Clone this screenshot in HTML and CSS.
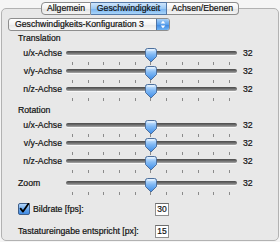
FILE: index.html
```html
<!DOCTYPE html>
<html>
<head>
<meta charset="utf-8">
<link rel="stylesheet" href="styles.css">
</head>
<body>
<div class="window">
  <div class="tabs">
    <div class="tab tab-first">Allgemein</div>
    <div class="tab tab-selected">Geschwindigkeit</div>
    <div class="tab tab-last">Achsen/Ebenen</div>
  </div>
  <div class="box">
    <div class="popup">
      <span class="popup-text">Geschwindigkeits-Konfiguration 3</span>
      <span class="stepper">
        <svg width="13" height="13" viewBox="0 0 13 13">
          <path d="M6.5 2.5 L9 5.5 H4 Z" fill="#fff"/>
          <path d="M6.5 10.5 L9 7.5 H4 Z" fill="#fff"/>
        </svg>
      </span>
    </div>

    <div class="section-title">Translation</div>
    <div class="slider-group">
      <div class="slider-row">
        <span class="label">u/x-Achse</span>
        <div class="slider"><div class="track"></div><div class="ticks"><i></i><i></i><i></i><i></i><i></i><i></i><i></i><i></i><i></i><i></i><i></i></div>
          <svg class="thumb" width="12" height="15" viewBox="0 0 12 15"><defs><linearGradient id="g1" x1="0" y1="0" x2="0" y2="1"><stop offset="0" stop-color="#d8ecff"/><stop offset="0.45" stop-color="#7fb8f4"/><stop offset="1" stop-color="#3d8be6"/></linearGradient></defs><path d="M2.5 0.5 H9.5 Q11.5 0.5 11.5 2.5 V8.5 L6 14 L0.5 8.5 V2.5 Q0.5 0.5 2.5 0.5 Z" fill="url(#g1)" stroke="#4d6f9c"/><path d="M2.5 2 H9.5" stroke="#fff" stroke-opacity="0.8"/></svg>
        </div>
        <span class="value">32</span>
      </div>
      <div class="slider-row">
        <span class="label">v/y-Achse</span>
        <div class="slider"><div class="track"></div><div class="ticks"><i></i><i></i><i></i><i></i><i></i><i></i><i></i><i></i><i></i><i></i><i></i></div>
          <svg class="thumb" width="12" height="15" viewBox="0 0 12 15"><path d="M2.5 0.5 H9.5 Q11.5 0.5 11.5 2.5 V8.5 L6 14 L0.5 8.5 V2.5 Q0.5 0.5 2.5 0.5 Z" fill="url(#g1)" stroke="#4d6f9c"/><path d="M2.5 2 H9.5" stroke="#fff" stroke-opacity="0.8"/></svg>
        </div>
        <span class="value">32</span>
      </div>
      <div class="slider-row">
        <span class="label">n/z-Achse</span>
        <div class="slider"><div class="track"></div><div class="ticks"><i></i><i></i><i></i><i></i><i></i><i></i><i></i><i></i><i></i><i></i><i></i></div>
          <svg class="thumb" width="12" height="15" viewBox="0 0 12 15"><path d="M2.5 0.5 H9.5 Q11.5 0.5 11.5 2.5 V8.5 L6 14 L0.5 8.5 V2.5 Q0.5 0.5 2.5 0.5 Z" fill="url(#g1)" stroke="#4d6f9c"/><path d="M2.5 2 H9.5" stroke="#fff" stroke-opacity="0.8"/></svg>
        </div>
        <span class="value">32</span>
      </div>
    </div>

    <div class="section-title section-second">Rotation</div>
    <div class="slider-group">
      <div class="slider-row">
        <span class="label">u/x-Achse</span>
        <div class="slider"><div class="track"></div><div class="ticks"><i></i><i></i><i></i><i></i><i></i><i></i><i></i><i></i><i></i><i></i><i></i></div>
          <svg class="thumb" width="12" height="15" viewBox="0 0 12 15"><path d="M2.5 0.5 H9.5 Q11.5 0.5 11.5 2.5 V8.5 L6 14 L0.5 8.5 V2.5 Q0.5 0.5 2.5 0.5 Z" fill="url(#g1)" stroke="#4d6f9c"/><path d="M2.5 2 H9.5" stroke="#fff" stroke-opacity="0.8"/></svg>
        </div>
        <span class="value">32</span>
      </div>
      <div class="slider-row">
        <span class="label">v/y-Achse</span>
        <div class="slider"><div class="track"></div><div class="ticks"><i></i><i></i><i></i><i></i><i></i><i></i><i></i><i></i><i></i><i></i><i></i></div>
          <svg class="thumb" width="12" height="15" viewBox="0 0 12 15"><path d="M2.5 0.5 H9.5 Q11.5 0.5 11.5 2.5 V8.5 L6 14 L0.5 8.5 V2.5 Q0.5 0.5 2.5 0.5 Z" fill="url(#g1)" stroke="#4d6f9c"/><path d="M2.5 2 H9.5" stroke="#fff" stroke-opacity="0.8"/></svg>
        </div>
        <span class="value">32</span>
      </div>
      <div class="slider-row">
        <span class="label">n/z-Achse</span>
        <div class="slider"><div class="track"></div><div class="ticks"><i></i><i></i><i></i><i></i><i></i><i></i><i></i><i></i><i></i><i></i><i></i></div>
          <svg class="thumb" width="12" height="15" viewBox="0 0 12 15"><path d="M2.5 0.5 H9.5 Q11.5 0.5 11.5 2.5 V8.5 L6 14 L0.5 8.5 V2.5 Q0.5 0.5 2.5 0.5 Z" fill="url(#g1)" stroke="#4d6f9c"/><path d="M2.5 2 H9.5" stroke="#fff" stroke-opacity="0.8"/></svg>
        </div>
        <span class="value">32</span>
      </div>
    </div>

    <div class="slider-group zoom-group">
      <div class="slider-row">
        <span class="label label-left">Zoom</span>
        <div class="slider"><div class="track"></div><div class="ticks"><i></i><i></i><i></i><i></i><i></i><i></i><i></i><i></i><i></i><i></i><i></i></div>
          <svg class="thumb" width="12" height="15" viewBox="0 0 12 15"><path d="M2.5 0.5 H9.5 Q11.5 0.5 11.5 2.5 V8.5 L6 14 L0.5 8.5 V2.5 Q0.5 0.5 2.5 0.5 Z" fill="url(#g1)" stroke="#4d6f9c"/><path d="M2.5 2 H9.5" stroke="#fff" stroke-opacity="0.8"/></svg>
        </div>
        <span class="value">32</span>
      </div>
    </div>

    <div class="field-row field-first">
      <span class="field-label">
        <svg class="checkbox" width="12" height="12" viewBox="0 0 12 12"><defs><linearGradient id="cb" x1="0" y1="0" x2="0" y2="1"><stop offset="0" stop-color="#bcdcfb"/><stop offset="0.5" stop-color="#6aa8ec"/><stop offset="1" stop-color="#3c88e3"/></linearGradient></defs><rect x="0.5" y="0.5" width="11" height="11" rx="1.5" fill="url(#cb)" stroke="#3f5f8a"/><path d="M2.6 5.6 L5 8.6 L10.6 0.6" fill="none" stroke="#000" stroke-width="1.8" stroke-linecap="round" stroke-linejoin="round"/></svg>
        Bildrate [fps]:
      </span>
      <span class="input">30</span>
    </div>
    <div class="field-row">
      <span class="field-label">Tastatureingabe entspricht [px]:</span>
      <span class="input">15</span>
    </div>
  </div>
</div>
</body>
</html>
```

FILE: styles.css
```css
* { box-sizing: border-box; }

html, body {
  margin: 0;
  padding: 0;
}

body {
  width: 280px;
  height: 242px;
  overflow: hidden;
  background: #f5f5f5;
  font-family: "Liberation Sans", Arial, sans-serif;
  font-size: 8.7px;
  color: #111;
  -webkit-text-stroke: 0.2px #111;
}

.window {
  padding-top: 2px;
}

.tabs {
  position: relative;
  z-index: 1;
  display: flex;
  justify-content: center;
  height: 13px;
}

.tab {
  height: 13px;
  line-height: 11px;
  border: 1px solid #8c8c8c;
  border-left: none;
  background: linear-gradient(#ffffff, #f1f1f1 50%, #e2e2e2 51%, #f4f4f4);
  white-space: nowrap;
  text-align: center;
  padding: 0;
}

.tab-first {
  border-left: 1px solid #8c8c8c;
  border-radius: 4px 0 0 4px;
  width: 50px;
}

.tab-selected {
  width: 76px;
  border-color: #5479a8;
  background: linear-gradient(#cfe5fb, #9ccaf5 50%, #75b1ef 51%, #a9d5fa);
}

.tab-last {
  border-radius: 0 4px 4px 0;
  width: 72px;
}

.box {
  margin: -7px 1px 0 1px;
  height: 233px;
  border: 1px solid #b2b2b2;
  border-radius: 5px;
  background: #e8e8e8;
  padding-top: 9px;
}

.popup {
  display: flex;
  align-items: center;
  margin-left: 6px;
  width: 162px;
  height: 13px;
  border: 1px solid #8e8e8e;
  border-radius: 3px;
  background: linear-gradient(#ffffff, #f3f3f3 50%, #e6e6e6 51%, #f7f7f7);
  overflow: hidden;
}

.popup-text {
  flex: 1;
  padding-left: 6px;
  line-height: 11px;
  white-space: nowrap;
}

.stepper {
  width: 13px;
  height: 11px;
  display: flex;
  align-items: center;
  justify-content: center;
  background: linear-gradient(#a7d0f8, #5aa0ec 50%, #3a86e2 51%, #6fb3f4);
  border-left: 1px solid #4f74a6;
}

.stepper svg { display: block; }

.section-title {
  margin: 1px 0 3px 16px;
  line-height: 12px;
  height: 12px;
}

.section-second {
  margin-top: 3px;
}

.slider-row {
  display: grid;
  grid-template-columns: 44px 171px auto;
  column-gap: 4px;
  padding-left: 16px;
  height: 18px;
}

.label {
  line-height: 12px;
  text-align: right;
  white-space: nowrap;
}

.label-left {
  text-align: left;
}

.value {
  line-height: 12px;
  padding-left: 2px;
}

.slider {
  position: relative;
  height: 18px;
}

.track {
  margin-top: 4px;
  height: 4px;
  border-radius: 2px;
  background: linear-gradient(#4a4a4a, #6e6e6e 50%, #a9a9a9);
  box-shadow: 0 1px 0 rgba(255,255,255,0.7);
}

.ticks {
  display: flex;
  justify-content: space-between;
  margin: 7px 7px 0 6px;
  height: 3px;
}

.ticks i {
  display: block;
  width: 1px;
  height: 3px;
  background: #8a8a8a;
}

.thumb {
  position: absolute;
  left: 79px;
  top: 1px;
  display: block;
}

.zoom-group {
  margin-top: 4px;
}

.field-row {
  display: flex;
  align-items: center;
  height: 14px;
  margin-top: 8px;
  padding-left: 16px;
}

.field-first {
  margin-top: 7px;
}

.field-label {
  display: flex;
  align-items: center;
  gap: 3px;
  width: 137px;
  white-space: nowrap;
}

.checkbox {
  display: block;
  flex: none;
}

.input {
  width: 14px;
  height: 13px;
  line-height: 11px;
  border: 1px solid #8f8f8f;
  border-top-color: #6d6d6d;
  background: #fff;
  text-align: center;
  font-size: 8.5px;
}
```
